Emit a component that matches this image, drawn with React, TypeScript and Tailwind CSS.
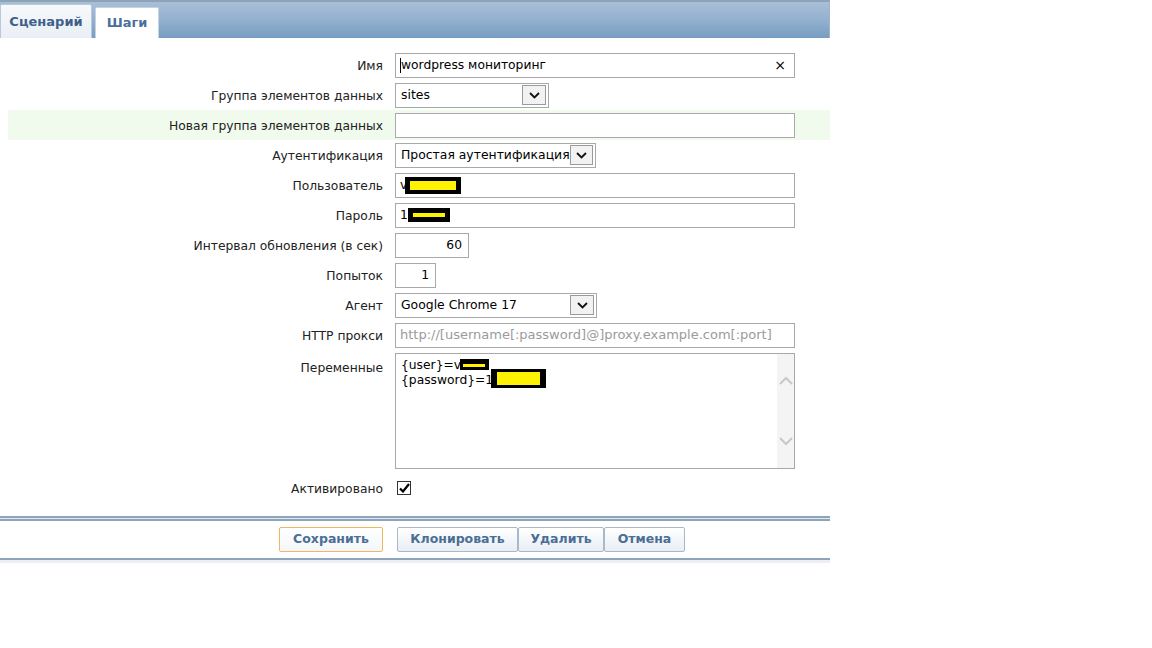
import type { ReactNode } from "react";

const FONT = { fontFamily: '"DejaVu Sans", Verdana, sans-serif' };

const Redact = ({ className }: { className: string }) => (
  <span className={`absolute bg-black ${className}`} />
);

const Row = ({
  label,
  children,
  tall,
  green,
}: {
  label: string;
  children: ReactNode;
  tall?: boolean;
  green?: boolean;
}) => (
  <div
    className={`flex ${tall ? "h-[123px] items-start" : "h-[30px] items-center"} ${
      green ? "bg-[#f0fbee] ml-2" : ""
    }`}
  >
    <div
      className={`${green ? "w-[375px]" : "w-[383px]"} text-right text-[12.3px] text-[#222] ${
        tall ? "pt-[9px]" : "pt-[2px]"
      }`}
    >
      {label}
    </div>
    <div className="ml-3 flex items-center">{children}</div>
  </div>
);

const SelectBox = ({ value, width }: { value: string; width: string }) => (
  <div
    className={`${width} h-[25px] border border-[#a9a9a9] bg-white flex items-center justify-between pl-[5px] pr-[2px] text-[12.4px] text-black`}
  >
    <span className="whitespace-nowrap">{value}</span>
    <span className="w-[24px] h-[20px] border border-[#9a9a9a] bg-[#f2f2f2] flex items-center justify-center">
      <svg width="11" height="7" viewBox="0 0 11 7">
        <path d="M1 1l4.5 4.5L10 1" fill="none" stroke="#111" strokeWidth="1.8" />
      </svg>
    </span>
  </div>
);

const Input = ({
  width,
  children,
  right,
}: {
  width: string;
  children?: ReactNode;
  right?: boolean;
}) => (
  <div
    className={`relative ${width} h-[25px] border border-[#a9a9a9] bg-white flex items-center text-[12.3px] text-black ${
      right ? "justify-end pr-[6px]" : "pl-[4px]"
    }`}
  >
    {children}
  </div>
);

const Button = ({
  label,
  width,
  primary,
}: {
  label: string;
  width: string;
  primary?: boolean;
}) => (
  <button
    className={`${width} h-[25px] text-[12.5px] font-bold text-[#4a6e96] rounded-[2px] border ${
      primary
        ? "border-[#f2b661] bg-gradient-to-b from-white to-[#f3f6f9]"
        : "border-[#a8b9cc] bg-gradient-to-b from-white to-[#e8eef4]"
    }`}
  >
    {label}
  </button>
);

export default function App() {
  return (
    <div className="w-[1152px] h-[648px] bg-white" style={FONT}>
      <div className="w-[830px]">
        {/* tabs */}
        <div className="h-[38px] border-t-2 border-[#8fa3b7] bg-gradient-to-b from-[#a9bfd8] via-[#93b0cf] to-[#779dc1] flex items-end border-r border-r-[#9fb4c8]">
          <div className="h-[34px] w-[92px] bg-gradient-to-b from-[#f7f9fb] to-[#e9eff5] border border-b-0 border-[#b9c9d9] rounded-t-[2px] flex items-center justify-center text-[13px] font-bold text-[#3e6089]">
            Сценарий
          </div>
          <div className="ml-[3px] h-[31px] w-[64px] bg-white border border-b-0 border-[#c6d4e2] rounded-t-[2px] flex items-center justify-center text-[13px] font-bold text-[#4a6f9a]">
            Шаги
          </div>
        </div>

        {/* form */}
        <div className="pt-[12px]">
          <Row label="Имя">
            <Input width="w-[400px]">
              <span className="border-l border-black h-[15px]" />
              <span className="flex-1">wordpress мониторинг</span>
              <span className="mr-[8px] text-[14px]">×</span>
            </Input>
          </Row>
          <Row label="Группа элементов данных">
            <SelectBox value="sites" width="w-[154px]" />
          </Row>
          <Row label="Новая группа элементов данных" green>
            <Input width="w-[400px]" />
          </Row>
          <Row label="Аутентификация">
            <SelectBox value="Простая аутентификация" width="w-[201px]" />
          </Row>
          <Row label="Пользователь">
            <Input width="w-[400px]">
              <span>v</span>
              <Redact className="left-[9px] top-[3px] w-[56px] h-[17px]" />
              <span className="absolute left-[14px] top-[7px] w-[46px] h-[9px] bg-[#fff200]" />
            </Input>
          </Row>
          <Row label="Пароль">
            <Input width="w-[400px]">
              <span>1</span>
              <Redact className="left-[12px] top-[4px] w-[42px] h-[14px]" />
              <span className="absolute left-[17px] top-[9px] w-[32px] h-[4px] bg-[#fff200]" />
            </Input>
          </Row>
          <Row label="Интервал обновления (в сек)">
            <Input width="w-[74px]" right>
              60
            </Input>
          </Row>
          <Row label="Попыток">
            <Input width="w-[41px]" right>
              1
            </Input>
          </Row>
          <Row label="Агент">
            <SelectBox value="Google Chrome 17" width="w-[202px]" />
          </Row>
          <Row label="HTTP прокси">
            <Input width="w-[400px]">
              <span className="text-[#9b9b9b] text-[13px] whitespace-nowrap">
                http://[username[:password]@]proxy.example.com[:port]
              </span>
            </Input>
          </Row>
          <Row label="Переменные" tall>
            <div className="relative mt-[3px] w-[400px] h-[116px] border border-[#a9a9a9] bg-white flex">
              <div className="flex-1 pl-[5px] pt-[4px] text-[12.3px] leading-[15px] text-black">
                <div>{"{user}=v"}</div>
                <div>{"{password}=1"}</div>
              </div>
              <div className="w-[17px] bg-[#f4f4f4] flex flex-col items-center justify-between py-[22px]">
                <svg width="14" height="9" viewBox="0 0 14 9">
                  <path d="M1 8l6-6 6 6" fill="none" stroke="#c8c8c8" strokeWidth="2" />
                </svg>
                <svg width="14" height="9" viewBox="0 0 14 9">
                  <path d="M1 1l6 6 6-6" fill="none" stroke="#c8c8c8" strokeWidth="2" />
                </svg>
              </div>
              <Redact className="left-[64px] top-[5px] w-[29px] h-[11px]" />
              <span className="absolute left-[67px] top-[10px] w-[22px] h-[3px] bg-[#fff200]" />
              <Redact className="left-[95px] top-[15px] w-[55px] h-[19px]" />
              <span className="absolute left-[101px] top-[18px] w-[43px] h-[13px] bg-[#fff200]" />
            </div>
          </Row>
          <Row label="Активировано">
            <span className="ml-[2px] w-[14px] h-[14px] border border-[#333] bg-white flex items-center justify-center">
              <svg width="11" height="10" viewBox="0 0 11 10">
                <path d="M1 5.5l3 3L10 1" fill="none" stroke="#000" strokeWidth="2.2" />
              </svg>
            </span>
          </Row>
        </div>

        {/* footer */}
        <div className="mt-[13px]">
          <div className="h-[2px] bg-[#8ea4bb]" />
          <div className="h-[1px] bg-[#dfe7ef]" />
          <div className="h-[2px] bg-[#8ea4bb]" />
          <div className="h-[37px] flex items-center">
            <div className="w-[383px] flex justify-end">
              <Button label="Сохранить" width="w-[104px]" primary />
            </div>
            <div className="ml-[14px] flex">
              <Button label="Клонировать" width="w-[121px]" />
              <Button label="Удалить" width="w-[86px]" />
              <Button label="Отмена" width="w-[81px]" />
            </div>
          </div>
          <div className="h-[2px] bg-[#8ea4bb]" />
          <div className="h-[3px] bg-[#eceff3]" />
        </div>
      </div>
    </div>
  );
}
